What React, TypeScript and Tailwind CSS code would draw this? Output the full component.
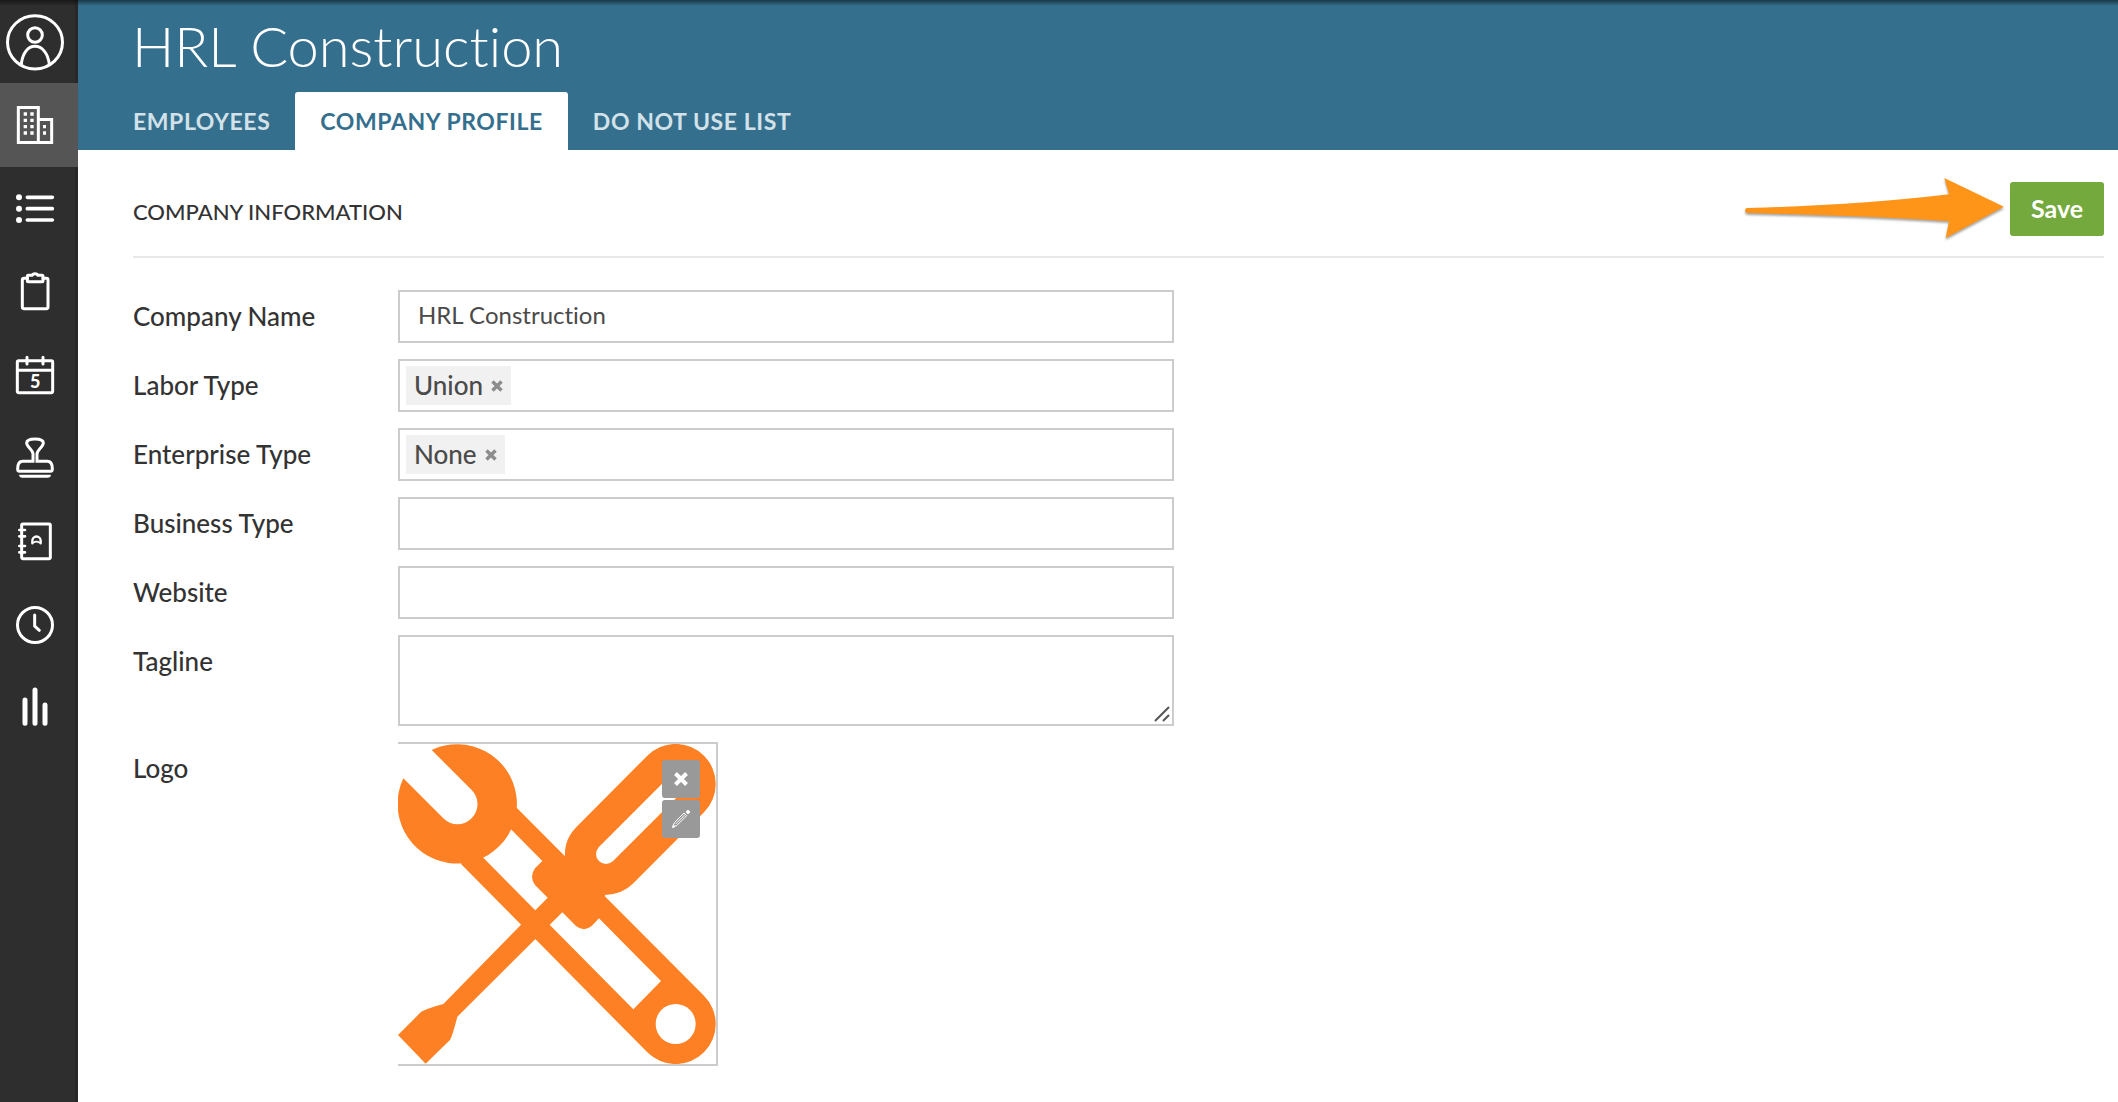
import type { ReactNode } from "react";

const icons: { label: string; viewBox: string; art: ReactNode }[] = [
  {
    label: "Account",
    viewBox: "15 35 180 180",
    art: (
      <>
        <ellipse cx="105" cy="126" rx="82.5" ry="80" />
        <circle cx="105" cy="104" r="22" />
        <path d="M64 192C67 158 84 138 105 138S144 158 148 192" />
      </>
    ),
  },
  {
    label: "Company",
    viewBox: "15 285 180 180",
    art: (
      <>
        <path d="M55 322.500H115V427.500H55ZM115 358.500H155V427.500H115" />
        <path
          fill="white"
          stroke="none"
          d="M71 337h10v10h-10zM91 337h10v10h-10zM71 356h10v10h-10zM91 356h10v10h-10zM71 375h10v10h-10zM91 375h10v10h-10zM71 394h10v10h-10zM91 394h10v10h-10zM129 375h9v10h-9zM129 394h9v10h-9z"
        />
      </>
    ),
  },
  {
    label: "Lists",
    viewBox: "15 535 180 180",
    art: (
      <>
        <path strokeWidth="11" d="M82 593H157M82 627H157M82 661H157" />
        <g fill="white" stroke="none">
          <circle cx="57" cy="593" r="9" />
          <circle cx="57" cy="627" r="9" />
          <circle cx="57" cy="661" r="9" />
        </g>
      </>
    ),
  },
  {
    label: "Orders",
    viewBox: "15 785 180 180",
    art: (
      <>
        <path d="M82 834H72Q67 834 67 839V920Q67 925 72 925H139Q144 925 144 920V839Q144 834 139 834H129" />
        <path d="M82 828Q82 825 85 825H96Q98 820 105 820T114 825H126Q129 825 129 828V841Q129 844 126 844H85Q82 844 82 841Z" />
      </>
    ),
  },
  {
    label: "Calendar",
    viewBox: "15 1035 180 180",
    art: (
      <>
        <rect x="52" y="1082" width="106" height="96" rx="4" />
        <path d="M52 1111H158M81 1072V1092M129 1072V1092" />
        <text
          x="106"
          y="1164"
          textAnchor="middle"
          fontSize="54"
          fontWeight="900"
          fill="white"
          stroke="none"
        >
          5
        </text>
      </>
    ),
  },
  {
    label: "Approvals",
    viewBox: "15 55 180 180",
    art: (
      <>
        <path d="M99 155V133C99 120 80 112 80 100Q80 88 105 88T130 100C130 112 111 120 111 133V155H142Q157 155 157 178Q157 185 152 185H58Q53 185 53 178Q53 155 68 155Z" />
        <path fill="white" stroke="none" d="M57 195H153Q152 204 143 204H67Q58 204 57 195Z" />
      </>
    ),
  },
  {
    label: "Contacts",
    viewBox: "15 305 180 180",
    art: (
      <>
        <rect x="65" y="341" width="86" height="104" rx="4" />
        <path strokeWidth="8" d="M58 359H75M58 378H75M58 407H75M58 426H75" />
        <path strokeWidth="7" d="M97 399V391A12.500 12.500 0 0 1 122 391V399" />
        <path strokeWidth="5" d="M100 397Q109 391 119 397" />
      </>
    ),
  },
  {
    label: "Time",
    viewBox: "15 555 180 180",
    art: (
      <>
        <circle cx="105" cy="645" r="52.500" />
        <path d="M104 615V648L118 661" />
      </>
    ),
  },
  {
    label: "Reports",
    viewBox: "15 805 180 180",
    art: <path strokeWidth="15" d="M75 871V941M105 841V941M135 886V941" />,
  },
];

function Sidebar() {
  return (
    <aside className="w-[78px] shrink-0 border-r-3 border-[#282828] bg-[#2e2e2e]">
      <nav className="grid h-[750px] auto-rows-fr">
        {icons.map((icon, i) => (
          <a
            key={icon.label}
            href="#"
            aria-label={icon.label}
            className={
              i === 1
                ? "-mr-[3px] flex items-center bg-[#555555] pl-[5px]"
                : "flex items-center pl-[5px]"
            }
          >
            <svg
              viewBox={icon.viewBox}
              className="size-[60px]"
              fill="none"
              stroke="white"
              strokeWidth="9"
              strokeLinecap="round"
            >
              {icon.art}
            </svg>
          </a>
        ))}
      </nav>
    </aside>
  );
}

function Header() {
  return (
    <header className="flex h-[150px] flex-col justify-between bg-[#356f8e] pl-[30px]">
      <h1 className="pl-6 pt-3 text-[56px] leading-[68px] font-light text-white">HRL Construction</h1>
      <nav className="flex text-[23px] leading-[58px] font-bold tracking-wide">
        <a href="#" className="px-[25px] text-[#d3e2e9]">
          EMPLOYEES
        </a>
        <a href="#" aria-current="page" className="rounded-t-[3px] bg-white px-[25px] text-[#356f8e]">
          COMPANY PROFILE
        </a>
        <a href="#" className="px-[25px] text-[#d3e2e9]">
          DO NOT USE LIST
        </a>
      </nav>
    </header>
  );
}

function Row({ id, label, children }: { id: string; label: string; children: ReactNode }) {
  return (
    <div className="flex items-start">
      <label htmlFor={id} className="w-[265px] shrink-0 text-[26px] leading-[53px] font-medium text-[#333333]">
        {label}
      </label>
      {children}
    </div>
  );
}

const box = "w-full max-w-[776px] border-2 border-[#cccccc] bg-white text-[#4a4a4a] outline-none";

function TagField({ id, tag }: { id: string; tag?: string }) {
  return (
    <div className={box + " flex h-[53px] items-center gap-2 px-1.5 text-[26px]"}>
      {tag && (
        <span className="flex h-[39px] shrink-0 items-center gap-2 bg-[#f1f1f1] px-2 font-medium">
          {tag}
          <button type="button" aria-label={"Remove " + tag}>
            <svg viewBox="0 0 12 12" className="size-3" stroke="#8c8c8c" strokeWidth="3.500">
              <path d="M1.500 1.500L10.500 10.500M10.500 1.500L1.500 10.500" />
            </svg>
          </button>
        </span>
      )}
      <input id={id} className="h-full min-w-0 flex-1 outline-none" />
    </div>
  );
}

function Logo() {
  return (
    <div className="relative w-[320px] border-2 border-l-0 border-[#cccccc]">
      <svg viewBox="54 42 954 960" className="block h-[320px] w-[318px]" fill="#fe8024" role="img" aria-label="Company logo">
        <path d="M410 233L972 797A120 120 0 0 1 802 967L243 402L300 250Z" />
        <path fill="white" d="M375 280L843 753L760 838L290 363Z" />
        <path d="M155 60A179 179 0 1 1 70 145L190 265A60 60 0 0 0 275 180Z" />
        <circle cx="887" cy="882" r="60" fill="white" />
        <path d="M54 915L122 847Q132 838 190 822L503 503L465 465Q447 440 465 415L487 393L555 377C554 342 566 314 590 290L802 77A120 120 0 0 1 972 247L760 460Q728 493 675 495L657 565L635 588Q612 607 588 588L547 547L232 860Q218 915 210 930L137 1001Z" />
        <path d="M678 372L887 163" stroke="white" strokeWidth="60" strokeLinecap="round" />
      </svg>
      <div className="absolute top-4 right-4 flex flex-col gap-0.5">
        <button id="logo" type="button" aria-label="Remove logo" className="flex size-[38px] items-center justify-center rounded-[3px] bg-[#999999]">
          <svg viewBox="0 0 14 14" className="size-3.5" stroke="white" strokeWidth="4">
            <path d="M1.500 1.500L12.500 12.500M12.500 1.500L1.500 12.500" />
          </svg>
        </button>
        <button type="button" aria-label="Edit logo" className="flex size-[38px] items-center justify-center rounded-[3px] bg-[#999999]">
          <svg viewBox="0 0 54 54" className="size-[18px]" fill="none" stroke="white" strokeWidth="3">
            <path d="M2 52L7 38L36 9L44 17L15 46ZM11 42L40 13" />
            <path d="M2 52L4 45L9 50Z" fill="white" />
            <circle cx="48" cy="6" r="4.500" fill="white" />
          </svg>
        </button>
      </div>
    </div>
  );
}

export default function App() {
  return (
    <div className="relative flex min-h-screen bg-white font-['Lato',sans-serif] [font-variant-ligatures:none]">
      <Sidebar />
      <div className="min-w-0 flex-1">
        <Header />
        <main className="pt-8 pr-3.5 pl-[55px]">
          <div className="flex items-center justify-between border-b-2 border-[#e8e8e8] pb-5">
            <h2 className="pt-1 text-[22px] font-medium text-[#333333]">COMPANY INFORMATION</h2>
            <div className="relative">
              <svg
                viewBox="75 80 783 192"
                className="absolute top-1/2 right-full mr-1 h-16 w-[261px] -translate-y-1/2 drop-shadow-[0_2px_1px_rgba(0,0,0,0.35)]"
                fill="#fe9519"
                aria-hidden="true"
              >
                <path d="M82 173Q420 164 687 132L673 83L852 169L677 263L687 213Q500 198 82 188Q75 187 75 180T82 173Z" />
              </svg>
              <button type="button" className="block h-[54px] w-[94px] rounded-[3px] bg-[#74a93d] text-[25px] font-bold text-white">
                Save
              </button>
            </div>
          </div>
          <form className="flex flex-col gap-4 pt-8 pb-9">
            <Row id="name" label="Company Name">
              <input id="name" defaultValue="HRL Construction" className={box + " h-[53px] px-[18px] pb-1 text-[24px]"} />
            </Row>
            <Row id="labor" label="Labor Type">
              <TagField id="labor" tag="Union" />
            </Row>
            <Row id="enterprise" label="Enterprise Type">
              <TagField id="enterprise" tag="None" />
            </Row>
            <Row id="business" label="Business Type">
              <TagField id="business" />
            </Row>
            <Row id="website" label="Website">
              <input id="website" className={box + " h-[53px] px-[18px] text-[24px]"} />
            </Row>
            <Row id="tagline" label="Tagline">
              <div className="relative flex w-full max-w-[776px]">
                <textarea id="tagline" className={box + " h-[91px] resize-none px-[18px] py-2 text-[24px]"} />
                <svg viewBox="0 0 16 16" className="absolute right-1 bottom-1 size-4" stroke="#555555" strokeWidth="2">
                  <path d="M1 15L15 1M9 15L15 9" />
                </svg>
              </div>
            </Row>
            <Row id="logo" label="Logo">
              <Logo />
            </Row>
          </form>
        </main>
      </div>
      <div className="pointer-events-none absolute inset-x-0 top-0 h-1.5 bg-linear-to-b from-black/50 to-transparent" />
    </div>
  );
}
